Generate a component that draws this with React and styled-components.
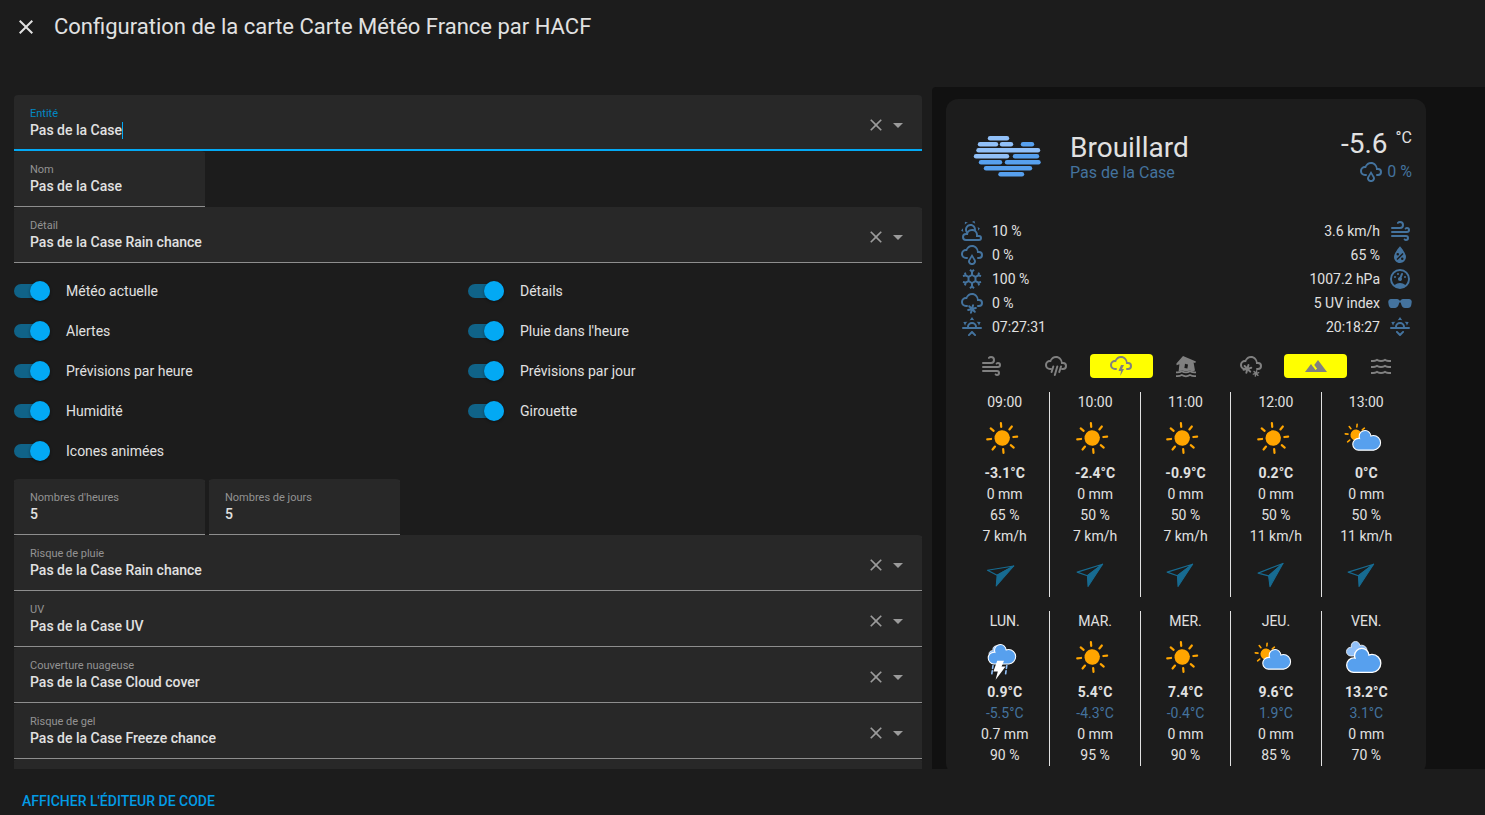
import React, { useState } from "react";
import styled, { createGlobalStyle } from "styled-components";

const CLOUD =
  "M6,16A5,5 0 0,1 1,11A5,5 0 0,1 6,6C7,3.65 9.3,2 12,2C15.43,2 18.24,4.66 18.5,8.03L19,8A4,4 0 0,1 23,12A4,4 0 0,1 19,16H18A1,1 0 0,1 17,15A1,1 0 0,1 18,14H19A2,2 0 0,0 21,12A2,2 0 0,0 19,10H17V9A5,5 0 0,0 12,4C9.5,4 7.45,5.82 7.06,8.19C6.73,8.07 6.37,8 6,8A3,3 0 0,0 3,11A3,3 0 0,0 6,14H7A1,1 0 0,1 8,15A1,1 0 0,1 7,16H6Z";
const FLAKE =
  "M7.88,18.07L10.07,17.5L8.46,15.88C8.07,15.5 8.07,14.86 8.46,14.46C8.85,14.07 9.5,14.07 9.88,14.46L11.5,16.07L12.07,13.88C12.21,13.34 12.76,13.03 13.29,13.17C13.83,13.31 14.14,13.86 14,14.4L13.41,16.59L15.6,16C16.14,15.86 16.69,16.17 16.83,16.71C16.97,17.24 16.66,17.79 16.12,17.93L13.93,18.5L15.54,20.12C15.93,20.5 15.93,21.15 15.54,21.54C15.15,21.93 14.5,21.93 14.12,21.54L12.5,19.93L11.93,22.12C11.79,22.66 11.24,22.97 10.71,22.83C10.17,22.69 9.86,22.14 10,21.6L10.59,19.41L8.4,20C7.86,20.14 7.31,19.83 7.17,19.29C7.03,18.76 7.34,18.21 7.88,18.07Z";
const HORIZON =
  "M3,12H7A5,5 0 0,1 12,7A5,5 0 0,1 17,12H21A1,1 0 0,1 22,13A1,1 0 0,1 21,14H3A1,1 0 0,1 2,13A1,1 0 0,1 3,12M15,12A3,3 0 0,0 12,9A3,3 0 0,0 9,12H15M12,2L14.39,5.42C13.65,5.15 12.84,5 12,5C11.16,5 10.35,5.15 9.61,5.42L12,2M3.34,7L7.5,6.65C6.9,7.16 6.36,7.78 5.94,8.5C5.5,9.24 5.25,10 5.11,10.79L3.34,7M20.65,7L18.88,10.79C18.74,10 18.47,9.23 18.05,8.5C17.63,7.78 17.1,7.15 16.5,6.64L20.65,7";

const ICONS = {
  close: (
    <path d="M19,6.41L17.59,5L12,10.59L6.41,5L5,6.41L10.59,12L5,17.59L6.41,19L12,13.41L17.59,19L19,17.59L13.41,12L19,6.41Z" />
  ),
  menuDown: <path d="M7,10L12,15L17,10H7Z" />,
  wind: (
    <path d="M4,10A1,1 0 0,1 3,9A1,1 0 0,1 4,8H12A2,2 0 0,0 14,6A2,2 0 0,0 12,4C11.45,4 10.95,4.22 10.59,4.59C10.2,5 9.56,5 9.17,4.59C8.78,4.2 8.78,3.56 9.17,3.17C9.9,2.45 10.9,2 12,2A4,4 0 0,1 16,6A4,4 0 0,1 12,10H4M19,12A1,1 0 0,0 20,11A1,1 0 0,0 19,10C18.72,10 18.47,10.11 18.29,10.29C17.9,10.68 17.27,10.68 16.88,10.29C16.5,9.9 16.5,9.27 16.88,8.88C17.42,8.34 18.17,8 19,8A3,3 0 0,1 22,11A3,3 0 0,1 19,14H4A1,1 0 0,1 3,13A1,1 0 0,1 4,12H19M18,18H4A1,1 0 0,1 3,17A1,1 0 0,1 4,16H18A3,3 0 0,1 21,19A3,3 0 0,1 18,22C17.17,22 16.42,21.66 15.88,21.12C15.5,20.73 15.5,20.1 15.88,19.71C16.27,19.32 16.9,19.32 17.29,19.71C17.47,19.89 17.72,20 18,20A1,1 0 0,0 19,19A1,1 0 0,0 18,18Z" />
  ),
  rain: (
    <>
      <path d={CLOUD} />
      <path d="M14.83,15.67C16.39,17.23 16.39,19.5 14.83,21.08C14.05,21.86 13,22 12,22C11,22 9.95,21.86 9.17,21.08C7.61,19.5 7.61,17.23 9.17,15.67L12,11L14.83,15.67M13.41,16.69L12,14.25L10.59,16.69C9.8,17.5 9.8,18.7 10.59,19.5C11,19.93 11.5,20 12,20C12.5,20 13,19.93 13.41,19.5C14.2,18.7 14.2,17.5 13.41,16.69Z" />
    </>
  ),
  pouring: (
    <>
      <path d={CLOUD} />
      <path
        d="M9.3,12.5L7.6,18M13.3,12.5L10.8,21M17,12.5L15.3,18"
        fill="none"
        stroke="currentColor"
        strokeWidth="2"
        strokeLinecap="round"
      />
    </>
  ),
  lightning: (
    <>
      <path d={CLOUD} />
      <path d="M12,11H15L13,15H15L11.25,22L12,17H9.5L12,11Z" />
    </>
  ),
  snow: (
    <>
      <path d={CLOUD} />
      <path d={FLAKE} />
    </>
  ),
  heavySnow: (
    <>
      <path d={CLOUD} />
      <g transform="translate(-3.6 -3.2)">
        <path d={FLAKE} />
      </g>
      <g transform="translate(8.6 6.8) scale(.7)">
        <path d={FLAKE} />
      </g>
    </>
  ),
  partlyCloudy: (
    <path d="M12.74,5.47C15.1,6.5 16.35,9.03 15.92,11.46C17.19,12.56 18,14.19 18,16V16.17C18.31,16.06 18.65,16 19,16A3,3 0 0,1 22,19A3,3 0 0,1 19,22H6A4,4 0 0,1 2,18A4,4 0 0,1 6,14H6.27C5,12.45 4.6,10.24 5.5,8.26C6.72,5.5 9.97,4.24 12.74,5.47M11.93,7.3C10.16,6.5 8.09,7.31 7.31,9.07C6.85,10.09 6.93,11.22 7.41,12.13C8.5,10.83 10.16,10 12,10C12.7,10 13.38,10.12 14,10.34C13.94,9.06 13.18,7.86 11.93,7.3M13.55,3.64C13,3.4 12.45,3.23 11.88,3.12L14.37,1.82L15.27,4.71C14.76,4.29 14.19,3.93 13.55,3.64M6.09,4.44C5.6,4.79 5.17,5.19 4.8,5.63L4.91,2.82L7.87,3.5C7.25,3.71 6.65,4.03 6.09,4.44M18,9.71C17.91,9.12 17.78,8.55 17.59,8L19.97,9.5L17.92,11.73C18.03,11.08 18.05,10.4 18,9.71M3.04,11.3C3.11,11.9 3.24,12.47 3.43,13L1.06,11.5L3.1,9.28C3,9.93 2.97,10.61 3.04,11.3M19,18H16V16A4,4 0 0,0 12,12A4,4 0 0,0 8,16H6A2,2 0 0,0 4,18A2,2 0 0,0 6,20H19A1,1 0 0,0 20,19A1,1 0 0,0 19,18Z" />
  ),
  snowflake: (
    <path d="M20.79,13.95L18.46,14.57L16.46,13.44V10.56L18.46,9.43L20.79,10.05L21.31,8.12L19.54,7.65L20,5.88L18.07,5.36L17.45,7.69L15.45,8.82L13,7.38V5.12L14.71,3.41L13.29,2L12,3.29L10.71,2L9.29,3.41L11,5.12V7.38L8.5,8.82L6.5,7.69L5.92,5.36L4,5.88L4.47,7.65L2.7,8.12L3.22,10.05L5.55,9.43L7.55,10.56V13.45L5.55,14.58L3.22,13.96L2.7,15.89L4.47,16.36L4,18.12L5.93,18.64L6.55,16.31L8.55,15.18L11,16.62V18.88L9.29,20.59L10.71,22L12,20.71L13.29,22L14.7,20.59L13,18.88V16.62L15.5,15.17L17.5,16.3L18.12,18.63L20,18.12L19.53,16.35L21.3,15.88L20.79,13.95M9.5,10.56L12,9.11L14.5,10.56V13.44L12,14.89L9.5,13.44V10.56Z" />
  ),
  humidity: (
    <path
      fillRule="evenodd"
      d="M12,3.25C12,3.25 6,10 6,14C6,17.32 8.69,20 12,20A6,6 0 0,0 18,14C18,10 12,3.25 12,3.25M14.47,9.97L15.53,11.03L9.53,17.03L8.47,15.97M9.75,10A1.25,1.25 0 0,1 11,11.25A1.25,1.25 0 0,1 9.75,12.5A1.25,1.25 0 0,1 8.5,11.25A1.25,1.25 0 0,1 9.75,10M14.25,14.5A1.25,1.25 0 0,1 15.5,15.75A1.25,1.25 0 0,1 14.25,17A1.25,1.25 0 0,1 13,15.75A1.25,1.25 0 0,1 14.25,14.5Z"
    />
  ),
  gauge: (
    <path d="M12,2A10,10 0 0,0 2,12A10,10 0 0,0 12,22A10,10 0 0,0 22,12A10,10 0 0,0 12,2M12,4A8,8 0 0,1 20,12C20,14.4 19,16.5 17.3,18C15.9,16.7 14,16 12,16C10,16 8.2,16.7 6.7,18C5,16.5 4,14.4 4,12A8,8 0 0,1 12,4M14,5.89C13.62,5.9 13.26,6.15 13.1,6.54L11.81,9.77L11.71,10C11,10.13 10.41,10.6 10.14,11.26C9.73,12.29 10.23,13.45 11.26,13.86C12.29,14.27 13.45,13.77 13.86,12.74C14.12,12.08 14,11.32 13.57,10.76L13.67,10.5L14.96,7.29L14.97,7.26C15.17,6.75 14.92,6.17 14.41,5.96C14.28,5.91 14.15,5.89 14,5.89M10,6A1,1 0 0,0 9,7A1,1 0 0,0 10,8A1,1 0 0,0 11,7A1,1 0 0,0 10,6M7,9A1,1 0 0,0 6,10A1,1 0 0,0 7,11A1,1 0 0,0 8,10A1,1 0 0,0 7,9M17,9A1,1 0 0,0 16,10A1,1 0 0,0 17,11A1,1 0 0,0 18,10A1,1 0 0,0 17,9Z" />
  ),
  sunglasses: (
    <path d="M7,17H4C2.38,17 0.96,15.74 0.76,14.14L0.26,11.15C0.15,10.3 0.39,9.5 0.91,8.92C1.43,8.34 2.19,8 3,8H9C9.83,8 10.58,8.35 11.06,8.96C11.17,9.11 11.27,9.27 11.35,9.45C11.78,9.36 12.22,9.36 12.64,9.45C12.72,9.27 12.82,9.11 12.94,8.96C13.41,8.35 14.16,8 15,8H21C21.81,8 22.57,8.34 23.09,8.92C23.6,9.5 23.84,10.3 23.74,11.11L23.23,14.18C23.04,15.74 21.61,17 20,17H17C15.44,17 13.92,15.81 13.54,14.3L12.64,11.59C12.26,11.31 11.73,11.31 11.35,11.59L10.43,14.37C10.07,15.82 8.56,17 7,17Z" />
  ),
  sunrise: (
    <>
      <path d={HORIZON} />
      <path d="M12.71,16.3L15.82,19.41C16.21,19.8 16.21,20.43 15.82,20.82C15.43,21.21 14.8,21.21 14.41,20.82L12,18.41L9.59,20.82C9.2,21.21 8.57,21.21 8.18,20.82C7.79,20.43 7.79,19.8 8.18,19.41L11.29,16.3C11.5,16.1 11.74,16 12,16C12.26,16 12.5,16.1 12.71,16.3Z" />
    </>
  ),
  sunset: (
    <>
      <path d={HORIZON} />
      <path d="M12.71,20.71L15.82,17.6C16.21,17.21 16.21,16.57 15.82,16.18C15.43,15.79 14.8,15.79 14.41,16.18L12,18.59L9.59,16.18C9.2,15.79 8.57,15.79 8.18,16.18C7.79,16.57 7.79,17.21 8.18,17.6L11.29,20.71C11.5,20.9 11.74,21 12,21C12.26,21 12.5,20.9 12.71,20.71Z" />
    </>
  ),
  flood: (
    <>
      <path
        fillRule="evenodd"
        d="M9,2L22,7.4L21.2,9L19.6,8.6L21,16.6L18.5,17.4L16,16.4L12,17.6L8,16.4L4.6,17.4L5.4,10.2L2.6,11.2L2.4,9.6L9,2ZM11,9.8L10.4,14L13.4,14.6L14,10.4L11,9.8Z"
      />
      <path
        d="M2,18.4H3.6Q5.8,18.4 7.8,17.2Q12,19.8 16,17.2Q18.2,18.4 20.4,18.4H22M2,22.2H3.6Q5.8,22.2 7.8,21Q12,23.6 16,21Q18.2,22.2 20.4,22.2H22"
        fill="none"
        stroke="currentColor"
        strokeWidth="1.7"
      />
    </>
  ),
  mountain: <path d="M14,6L10.25,11L13.1,14.8L11.5,16C9.81,13.75 7,10 7,10L1,18H23L14,6Z" />,
  waves: (
    <path d="M20,12H22V14H20C18.62,14 17.26,13.65 16,13C13.5,14.3 10.5,14.3 8,13C6.74,13.65 5.37,14 4,14H2V12H4C5.39,12 6.78,11.53 8,10.67C10.44,12.38 13.56,12.38 16,10.67C17.22,11.53 18.61,12 20,12M20,6H22V8H20C18.62,8 17.26,7.65 16,7C13.5,8.3 10.5,8.3 8,7C6.74,7.65 5.37,8 4,8H2V6H4C5.39,6 6.78,5.53 8,4.67C10.44,6.38 13.56,6.38 16,4.67C17.22,5.53 18.61,6 20,6M20,18H22V20H20C18.62,20 17.26,19.65 16,19C13.5,20.3 10.5,20.3 8,19C6.74,19.65 5.37,20 4,20H2V18H4C5.39,18 6.78,17.53 8,16.67C10.44,18.38 13.56,18.38 16,16.67C17.22,17.53 18.61,18 20,18Z" />
  ),
};

const Icon = ({ name, size = 24 }) => (
  <IconSvg viewBox="0 0 24 24" width={size} height={size} aria-hidden="true">
    {ICONS[name]}
  </IconSvg>
);

const RAYS = [0, 45, 90, 135, 180, 225, 270, 315];

const Sun = ({ x, y, scale = 1, tilt }) => (
  <g transform={`translate(${x} ${y}) rotate(${tilt}) scale(${scale})`}>
    <circle r="7.7" fill="orange" />
    {RAYS.map((angle) => (
      <line
        key={angle}
        y1="-11.2"
        y2="-15"
        stroke="orange"
        strokeWidth="2.2"
        strokeLinecap="round"
        transform={`rotate(${angle})`}
      />
    ))}
  </g>
);

const Cloud = ({ x, y, scale, light }) => (
  <path
    transform={`translate(${x} ${y}) scale(${scale})`}
    d="M47.7,35.4c0-4.6-3.7-8.2-8.2-8.2c-1,0-1.9,0.2-2.8,0.5c-0.3-3.4-3.1-6.2-6.6-6.2c-3.7,0-6.7,3-6.7,6.7c0,0.8,0.2,1.6,0.4,2.3c-0.3-0.1-0.7-0.1-1-0.1c-3.7,0-6.7,3-6.7,6.7c0,3.6,2.9,6.6,6.5,6.7l17.2,0C44.2,43.3,47.7,39.8,47.7,35.4z"
    fill={light ? "#91c0f8" : "#57a0ee"}
    stroke="#fff"
    strokeWidth="1.2"
  />
);

const SKIES = {
  sunny: <Sun x={22.2} y={25} tilt={-5} />,
  partly: (
    <>
      <Sun x={15} y={22} scale={0.72} tilt={6} />
      <Cloud x={-2.4} y={-1.4} scale={0.88} />
    </>
  ),
  cloudy: (
    <>
      <Cloud x={-5} y={-4.5} scale={0.65} light />
      <Cloud x={-11.7} y={-6.9} scale={1.08} />
    </>
  ),
  storm: (
    <>
      <Cloud x={0.4} y={2.4} scale={0.53} light />
      <Cloud x={-5.8} y={-6.2} scale={0.87} />
      <path
        d="M13,33.5L11.8,42M26.8,33.5L25.6,42"
        stroke="#91c0f8"
        strokeWidth="1.6"
        strokeDasharray="3 2.4"
        strokeLinecap="round"
      />
      <path d="M17.2,28.8H24L21.6,34.4H25.6L15.6,47.8L17.8,39.4H13.4Z" fill="#fff" />
    </>
  ),
};

const Sky = ({ kind }) => (
  <SkySvg viewBox="0 0 50 50" aria-hidden="true">
    {SKIES[kind]}
  </SkySvg>
);

const WindArrow = ({ bearing }) => (
  <SkySvg viewBox="0 0 50 50" aria-hidden="true">
    <g transform={`translate(20.6 26.3) rotate(${bearing})`} stroke="#176b91" strokeLinejoin="round">
      <path d="M0,-15L-9,10L0,4Z" fill="none" strokeWidth="1.2" />
      <path d="M0,-15L9,10L0,4Z" fill="#176b91" strokeWidth="1" />
    </g>
  </SkySvg>
);

const FOG_BARS = [
  [18, 35, 6, true],
  [8, 24, 12, true],
  [30, 39, 12, true],
  [51, 60, 12, false],
  [6.5, 66, 18, true],
  [4, 35, 24, true],
  [43, 65, 24, false],
  [9, 28, 30, false],
  [35, 66.5, 30, false],
  [14, 58, 36, false],
  [28.5, 50, 42, false],
];

const FogIcon = () => (
  <FogSvg viewBox="0 0 72 48" aria-hidden="true">
    {FOG_BARS.map(([from, to, y, light], i) => (
      <line
        key={i}
        x1={from}
        x2={to}
        y1={y + 0.3}
        y2={y + 0.3}
        stroke={light ? "#91c0f8" : "#57a0ee"}
        strokeWidth="4.4"
        strokeLinecap="round"
      />
    ))}
  </FogSvg>
);

const TOGGLES = [
  "Météo actuelle",
  "Détails",
  "Alertes",
  "Pluie dans l'heure",
  "Prévisions par heure",
  "Prévisions par jour",
  "Humidité",
  "Girouette",
  "Icones animées",
];

const SENSORS = [
  ["pluie", "Risque de pluie", "Pas de la Case Rain chance"],
  ["uv", "UV", "Pas de la Case UV"],
  ["nuages", "Couverture nuageuse", "Pas de la Case Cloud cover"],
  ["gel", "Risque de gel", "Pas de la Case Freeze chance"],
];

const DETAILS_LEFT = [
  ["partlyCloudy", "10 %"],
  ["rain", "0 %"],
  ["snowflake", "100 %"],
  ["snow", "0 %"],
  ["sunrise", "07:27:31"],
];

const DETAILS_RIGHT = [
  ["wind", "3.6 km/h"],
  ["humidity", "65 %"],
  ["gauge", "1007.2 hPa"],
  ["sunglasses", "5 UV index"],
  ["sunset", "20:18:27"],
];

const ALERTS = [
  ["wind", false],
  ["pouring", false],
  ["lightning", true],
  ["flood", false],
  ["heavySnow", false],
  ["mountain", true],
  ["waves", false],
];

const HOURS = [
  ["09:00", "sunny", "-3.1°C", "0 mm", "65 %", "7 km/h", 61],
  ["10:00", "sunny", "-2.4°C", "0 mm", "50 %", "7 km/h", 53],
  ["11:00", "sunny", "-0.9°C", "0 mm", "50 %", "7 km/h", 53],
  ["12:00", "sunny", "0.2°C", "0 mm", "50 %", "11 km/h", 49],
  ["13:00", "partly", "0°C", "0 mm", "50 %", "11 km/h", 53],
];

const DAYS = [
  ["LUN.", "storm", "0.9°C", "-5.5°C", "0.7 mm", "90 %"],
  ["MAR.", "sunny", "5.4°C", "-4.3°C", "0 mm", "95 %"],
  ["MER.", "sunny", "7.4°C", "-0.4°C", "0 mm", "90 %"],
  ["JEU.", "partly", "9.6°C", "1.9°C", "0 mm", "85 %"],
  ["VEN.", "cloudy", "13.2°C", "3.1°C", "0 mm", "70 %"],
];

const TextField = ({ id, label, initial = "", active, picker, ...rest }) => {
  const [value, setValue] = useState(initial);

  return (
    <Field $active={active}>
      <FieldText>
        {label && (
          <FieldLabel htmlFor={id} $active={active}>
            {label}
          </FieldLabel>
        )}
        <FieldInput
          id={id}
          type="text"
          value={value}
          $active={active}
          onChange={(e) => setValue(e.target.value)}
          {...rest}
        />
      </FieldText>
      {picker && (
        <>
          <FieldButton type="button" aria-label="Effacer" onClick={() => setValue("")}>
            <Icon name="close" size={20} />
          </FieldButton>
          <FieldButton type="button" aria-label="Ouvrir">
            <Icon name="menuDown" />
          </FieldButton>
        </>
      )}
    </Field>
  );
};

const Editor = () => (
  <Form>
    <TextField id="entite" label="Entité" initial="Pas de la Case" active picker />
    <ShortFields>
      <TextField id="nom" label="Nom" initial="Pas de la Case" />
    </ShortFields>
    <TextField id="detail" label="Détail" initial="Pas de la Case Rain chance" picker />
    <Toggles>
      {TOGGLES.map((label) => (
        <ToggleLabel key={label}>
          <Switch type="checkbox" role="switch" defaultChecked />
          {label}
        </ToggleLabel>
      ))}
    </Toggles>
    <ShortFields>
      <TextField id="heures" label="Nombres d'heures" initial="5" />
      <TextField id="jours" label="Nombres de jours" initial="5" />
    </ShortFields>
    {SENSORS.map(([id, label, value]) => (
      <TextField key={id} id={id} label={label} initial={value} picker />
    ))}
    <TextField id="neige" aria-label="Risque de neige" picker />
  </Form>
);

const WeatherCard = () => (
  <Card>
    <Current>
      <FogIcon />
      <Place>
        <Condition>Brouillard</Condition>
        <PlaceName>Pas de la Case</PlaceName>
      </Place>
      <Now>
        <Temperature>
          -5.6 <Unit>°C</Unit>
        </Temperature>
        <RainChance>
          <Icon name="rain" />0 %
        </RainChance>
      </Now>
    </Current>
    <Details>
      <DetailList>
        {DETAILS_LEFT.map(([icon, text]) => (
          <Detail key={icon}>
            <Icon name={icon} />
            {text}
          </Detail>
        ))}
      </DetailList>
      <DetailList>
        {DETAILS_RIGHT.map(([icon, text]) => (
          <Detail key={icon} $end>
            <Icon name={icon} />
            {text}
          </Detail>
        ))}
      </DetailList>
    </Details>
    <Alerts>
      {ALERTS.map(([icon, on]) => (
        <Alert key={icon} $on={on}>
          <Icon name={icon} />
        </Alert>
      ))}
    </Alerts>
    <Forecast>
      {HOURS.map(([time, sky, temp, rain, humidity, wind, bearing]) => (
        <Slot key={time}>
          <span>{time}</span>
          <Sky kind={sky} />
          <strong>{temp}</strong>
          <span>{rain}</span>
          <span>{humidity}</span>
          <span>{wind}</span>
          <WindArrow bearing={bearing} />
        </Slot>
      ))}
    </Forecast>
    <Forecast>
      {DAYS.map(([day, sky, high, low, rain, humidity]) => (
        <Slot key={day}>
          <span>{day}</span>
          <Sky kind={sky} />
          <strong>{high}</strong>
          <Low>{low}</Low>
          <span>{rain}</span>
          <span>{humidity}</span>
        </Slot>
      ))}
    </Forecast>
  </Card>
);

const App = () => (
  <>
    <GlobalStyle />
    <Dialog>
      <Header>
        <CloseButton type="button" aria-label="Fermer">
          <Icon name="close" />
        </CloseButton>
        <Title>Configuration de la carte Carte Météo France par HACF</Title>
      </Header>
      <Content>
        <Editor />
        <Preview>
          <WeatherCard />
        </Preview>
      </Content>
      <Footer>
        <CodeButton type="button">Afficher l'éditeur de code</CodeButton>
      </Footer>
    </Dialog>
  </>
);

export default App;

const GlobalStyle = createGlobalStyle`
  * {
    box-sizing: border-box;
  }

  body {
    margin: 0;
    background: #1c1c1c;
    color: #e1e1e1;
    font-family: Roboto, sans-serif;
    font-size: 14px;
  }

  button,
  input {
    font-family: inherit;
  }
`;

const IconSvg = styled.svg`
  display: block;
  flex-shrink: 0;
  fill: currentColor;
`;

const SkySvg = styled.svg`
  display: block;
  width: 50px;
  height: 50px;
`;

const FogSvg = styled.svg`
  width: 72px;
  height: 48px;
  margin: 0 26px 0 12px;
`;

const Dialog = styled.div`
  display: flex;
  flex-direction: column;
  height: 100vh;
  overflow: hidden;
`;

const Header = styled.header`
  display: flex;
  align-items: flex-start;
  gap: 16px;
  height: 87px;
  flex-shrink: 0;
  padding: 12px 14px;
`;

const CloseButton = styled.button`
  padding: 3px 0;
  border: none;
  background: none;
  color: #e1e1e1;
  cursor: pointer;
`;

const Title = styled.h1`
  margin: 0;
  font-size: 22px;
  font-weight: 400;
  line-height: 30px;
`;

const Content = styled.main`
  display: grid;
  grid-template-columns: minmax(0, 1fr) 553px;
  gap: 10px;
  flex: 1;
  min-height: 0;
  padding-left: 14px;
`;

const Form = styled.form`
  padding-top: 8px;
  overflow: hidden;
`;

const Field = styled.div`
  display: flex;
  align-items: center;
  height: 56px;
  padding: 0 12px 0 16px;
  border-radius: 4px 4px 0 0;
  background: #282828;
  box-shadow: inset 0 ${(p) => (p.$active ? "-2px #03a9f4" : "-1px #8e8e8e")};
`;

const FieldText = styled.div`
  display: flex;
  flex: 1;
  flex-direction: column;
  align-items: flex-start;
  min-width: 0;
  padding-bottom: 2px;
`;

const FieldLabel = styled.label`
  color: ${(p) => (p.$active ? "#0288c4" : "#939393")};
  font-size: 11px;
  line-height: 16px;
`;

const FieldInput = styled.input`
  field-sizing: content;
  max-width: 100%;
  height: 17px;
  padding: 0;
  border: none;
  border-right: 1px solid ${(p) => (p.$active ? "#03a9f4" : "transparent")};
  outline: none;
  background: none;
  color: #e1e1e1;
  font-size: 14px;
  font-weight: 500;
`;

const FieldButton = styled.button`
  padding: 3px 0 0;
  border: none;
  background: none;
  color: #9b9b9b;
  cursor: pointer;
`;

const ShortFields = styled.div`
  display: flex;
  gap: 4px;

  > * {
    flex: 0 1 191px;
  }
`;

const Toggles = styled.div`
  display: grid;
  grid-template-columns: 1fr 1fr;
  padding: 8px 0;
`;

const ToggleLabel = styled.label`
  display: flex;
  align-items: center;
  gap: 16px;
  height: 40px;
  cursor: pointer;
`;

const Switch = styled.input`
  display: flex;
  align-items: center;
  appearance: none;
  width: 36px;
  height: 14px;
  margin: 0;
  border-radius: 7px;
  background: #4d4d4d;
  cursor: pointer;

  &::before {
    content: "";
    flex-shrink: 0;
    width: 20px;
    height: 20px;
    border-radius: 50%;
    background: #b9b9b9;
    box-shadow: 0 1px 3px rgba(0, 0, 0, 0.4);
  }

  &:checked {
    justify-content: flex-end;
    background: #106388;
  }

  &:checked::before {
    background: #03a9f4;
  }
`;

const Preview = styled.section`
  padding: 12px 14px 0;
  border-radius: 4px 0 0 0;
  background: #111;
  overflow: hidden;
`;

const Card = styled.article`
  display: flex;
  flex-direction: column;
  gap: 14px;
  max-width: 480px;
  padding: 33px 14px 9px;
  border-radius: 12px;
  background: #1c1c1c;
`;

const Current = styled.div`
  display: flex;
  align-items: flex-start;
  height: 73px;
`;

const Place = styled.div`
  flex: 1;
`;

const Condition = styled.h2`
  margin: 0;
  font-size: 28px;
  font-weight: 400;
  line-height: 32px;
`;

const PlaceName = styled.p`
  margin: 0;
  color: #44739e;
  font-size: 16px;
  line-height: 18px;
`;

const Now = styled.div`
  display: flex;
  flex-direction: column;
  align-items: flex-end;
`;

const Temperature = styled.div`
  display: flex;
  gap: 8px;
  font-size: 28px;
  line-height: 24px;
`;

const Unit = styled.span`
  font-size: 16px;
  line-height: 12px;
`;

const RainChance = styled.div`
  display: flex;
  align-items: center;
  gap: 4px;
  padding-top: 4px;
  color: #44739e;
  font-size: 16px;
  line-height: 20px;
`;

const Details = styled.div`
  display: flex;
  justify-content: space-between;
  padding-bottom: 1px;
`;

const DetailList = styled.ul`
  margin: 0;
  padding: 0;
  list-style: none;
`;

const Detail = styled.li`
  display: flex;
  flex-direction: ${(p) => (p.$end ? "row-reverse" : "row")};
  align-items: center;
  gap: 8px;
  height: 24px;

  svg {
    color: #44739e;
  }
`;

const Alerts = styled.ul`
  display: grid;
  grid-template-columns: repeat(7, 1fr);
  gap: 2px;
  margin: 0;
  padding: 0;
  list-style: none;
`;

const Alert = styled.li`
  display: flex;
  justify-content: center;
  border-radius: 4px;
  background: ${(p) => (p.$on ? "#ff0" : "none")};
  color: #808080;
`;

const Forecast = styled.div`
  display: grid;
  grid-template-columns: repeat(5, 1fr);
`;

const Slot = styled.div`
  display: flex;
  flex-direction: column;
  align-items: center;
  border-right: 1px solid #e1e1e1;
  line-height: 21px;

  &:last-child {
    border-right-color: transparent;
  }
`;

const Low = styled.span`
  color: #44739e;
`;

const Footer = styled.footer`
  height: 46px;
  flex-shrink: 0;
  padding: 14px;
`;

const CodeButton = styled.button`
  padding: 8px;
  border: none;
  background: none;
  color: #039be5;
  font-size: 14px;
  font-weight: 500;
  line-height: 20px;
  text-transform: uppercase;
  cursor: pointer;
`;
